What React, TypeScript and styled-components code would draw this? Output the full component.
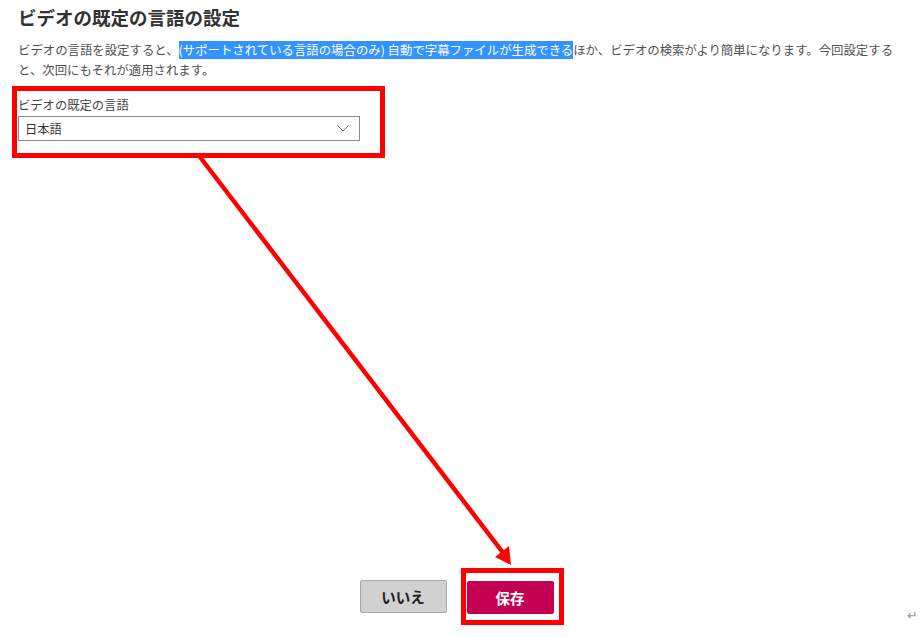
import React from "react"
import styled, { createGlobalStyle } from "styled-components"

const GlobalStyle = createGlobalStyle`
  html, body {
    margin: 0;
    padding: 0;
    background: #ffffff;
  }
  body {
    font-family: "Noto Sans CJK JP", "Noto Sans", sans-serif;
  }
  #root {
    height: 100vh;
  }
`

const Page = styled.div`
  position: relative;
  box-sizing: border-box;
  height: 100%;
  display: flex;
  flex-direction: column;
  padding: 0 18px;
  overflow: hidden;
`

const Main = styled.main`
  flex: 1;
`

const Title = styled.h1`
  margin: 0;
  padding-top: 4px;
  font-size: 18.5px;
  line-height: 26px;
  font-weight: 700;
  color: #323232;
`

const Description = styled.p`
  margin: 10px 0 0;
  width: 888px;
  font-size: 12.4px;
  line-height: 20px;
  color: #505050;
`

const Selected = styled.span`
  background: #3394ff;
  color: #ffffff;
`

const Callout = styled.div<{ $pad: string }>`
  display: inline-block;
  border: 5px solid #ff0000;
  padding: ${(p) => p.$pad};
`

const FieldCallout = styled(Callout)`
  margin: 6px 0 0 -6px;
`

const Field = styled.div`
  display: flex;
  flex-direction: column;
  gap: 3px;
`

const Label = styled.label`
  font-size: 12.3px;
  line-height: 16px;
  color: #444444;
`

const Select = styled.div`
  box-sizing: border-box;
  width: 342px;
  height: 25px;
  display: flex;
  align-items: center;
  justify-content: space-between;
  padding: 0 10px 0 6px;
  border: 1px solid #8a8a8a;
  font-size: 12.3px;
  color: #333333;
`

const Footer = styled.footer`
  display: grid;
  grid-template-columns: 1fr auto 1fr;
  align-items: center;
  padding-bottom: 12px;
`

const Buttons = styled.div`
  grid-column: 2;
  display: flex;
  align-items: center;
  gap: 14px;
`

const Button = styled.button<{ $primary?: boolean }>`
  box-sizing: border-box;
  width: 87px;
  height: 33px;
  border-radius: 2px;
  border: 1px solid ${(p) => (p.$primary ? "#c30052" : "#a8a8a8")};
  background: ${(p) => (p.$primary ? "#c30052" : "#d1d1d1")};
  color: ${(p) => (p.$primary ? "#ffffff" : "#1e1e1e")};
  font-family: inherit;
  font-size: 14.5px;
  font-weight: 700;
  padding: 0;
  cursor: pointer;
`

const ReturnMark = styled.span`
  grid-column: 3;
  justify-self: end;
  align-self: end;
  margin-right: -13px;
  margin-bottom: 2px;
  font-size: 13px;
  line-height: 14px;
  color: #9a9a9a;
  font-family: "DejaVu Sans", sans-serif;
`

const ArrowLayer = styled.svg`
  position: absolute;
  inset: 0;
  width: 100%;
  height: 100%;
  pointer-events: none;
`

const Chevron = () => (
  <svg width="12" height="7" viewBox="0 0 12 7">
    <polyline points="0.5,0.5 6,6 11.5,0.5" fill="none" stroke="#7a7a7a" strokeWidth="1" />
  </svg>
)

export default function App() {
  return (
    <>
      <GlobalStyle />
      <Page>
        <Main>
          <Title>ビデオの既定の言語の設定</Title>
          <Description>
            ビデオの言語を設定すると、
            <Selected>(サポートされている言語の場合のみ) 自動で字幕ファイルが生成できる</Selected>
            ほか、ビデオの検索がより簡単になります。今回設定すると、次回にもそれが適用されます。
          </Description>
          <FieldCallout $pad="6px 20px 12px 1px">
            <Field>
              <Label>ビデオの既定の言語</Label>
              <Select>
                <span>日本語</span>
                <Chevron />
              </Select>
            </Field>
          </FieldCallout>
        </Main>
        <Footer>
          <Buttons>
            <Button>いいえ</Button>
            <Callout $pad="8px 5px 6px 1px">
              <Button $primary>保存</Button>
            </Callout>
          </Buttons>
          <ReturnMark>↵</ReturnMark>
        </Footer>
        <ArrowLayer viewBox="0 0 923 637">
          <line x1="200" y1="157" x2="504" y2="554" stroke="#ff0000" strokeWidth="4.5" />
          <polygon points="511,565 495,557 509,546" fill="#ff0000" />
        </ArrowLayer>
      </Page>
    </>
  )
}
